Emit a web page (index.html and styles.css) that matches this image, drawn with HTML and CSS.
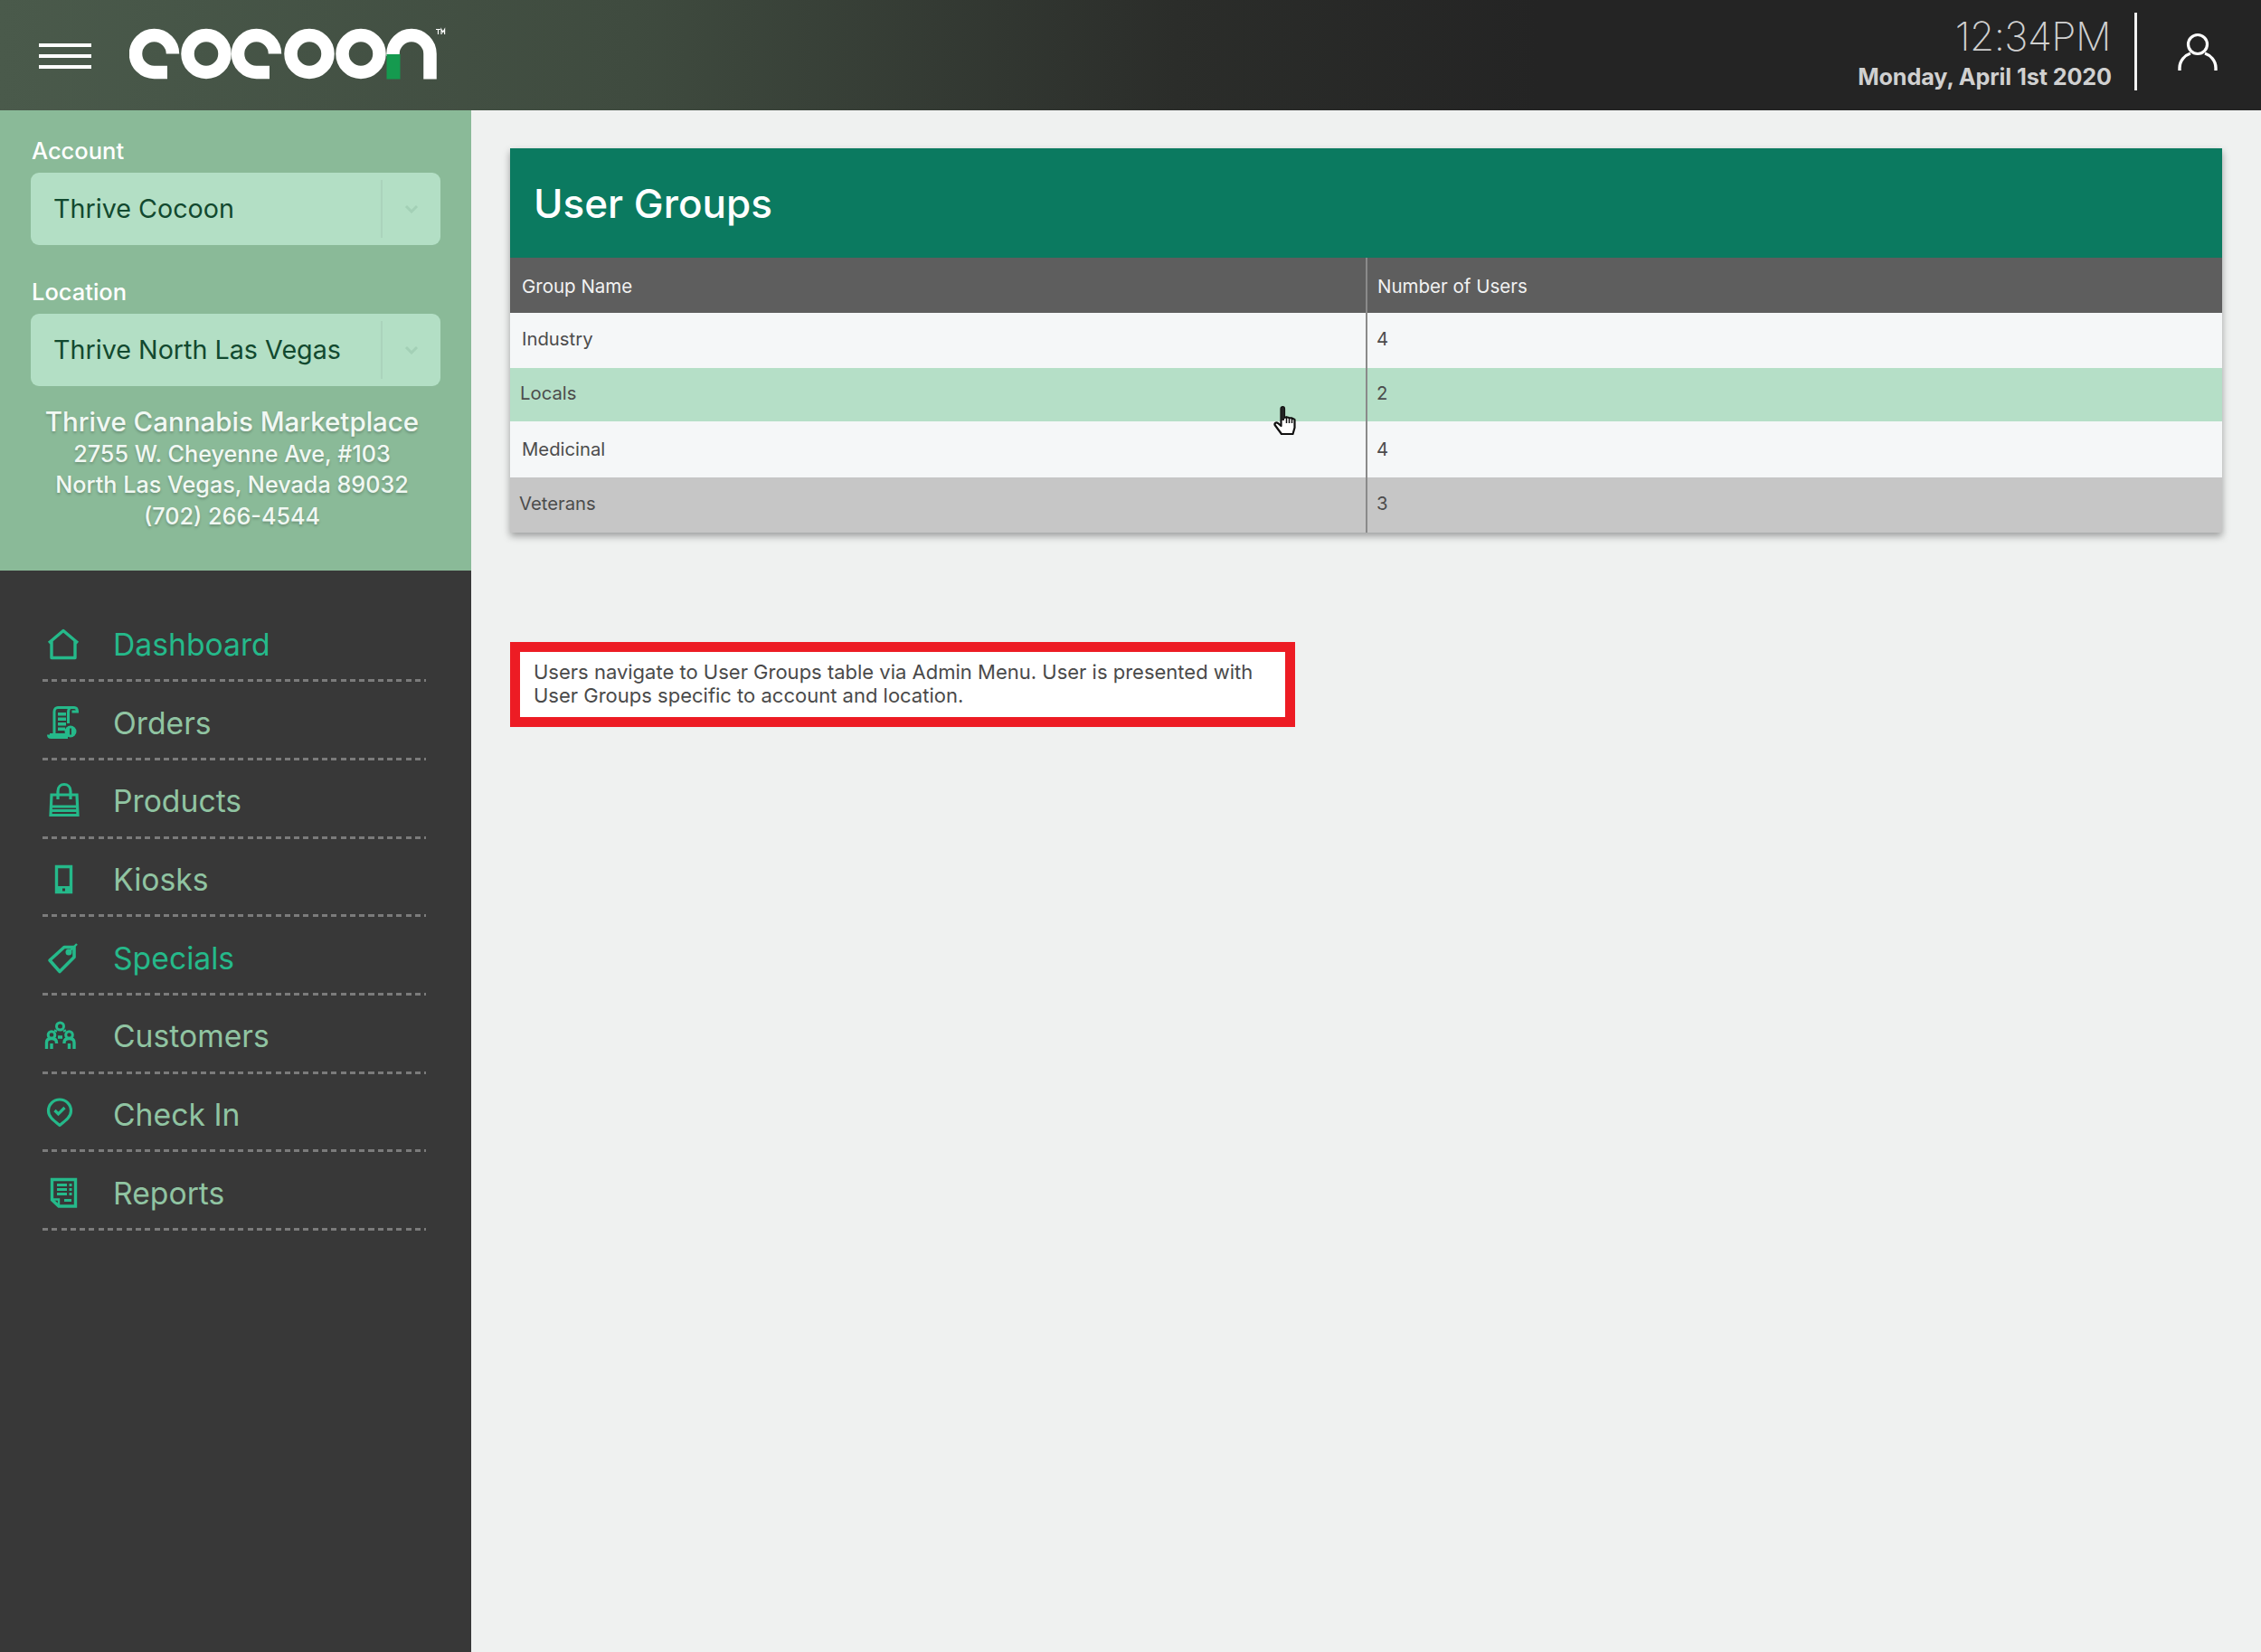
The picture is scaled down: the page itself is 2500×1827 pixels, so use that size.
FILE: index.html
```html
<!DOCTYPE html>
<html lang="en">
<head>
<meta charset="utf-8">
<title>User Groups</title>
<link rel="stylesheet" href="styles.css">
</head>
<body>
<div class="app">
  <header class="topbar">
    <button class="burger" aria-label="Menu"><span></span><span></span><span></span></button>
    <svg class="logo" viewBox="0 0 352 58" width="352" height="58" aria-label="cocoon">
      <g fill="none" stroke="#fff" stroke-width="14.5">
        <path d="M48 29.5A20.5 20.5 0 1 0 27.5 50H42"/>
        <circle cx="85" cy="29.5" r="20.5"/>
        <path d="M161 29.5A20.5 20.5 0 1 0 140.500 50H155"/>
        <circle cx="199" cy="29.5" r="20.5"/>
        <circle cx="256" cy="29.5" r="20.5"/>
        <path d="M291.500 32V29.500A20.500 20.500 0 0 1 332.500 29.500V57.500"/>
      </g>
      <rect x="284.500" y="30" width="15" height="27.500" fill="#159a4f"/>
      <path d="M339 2.500h5M341.500 2.500v5.500M345 8V2.500l1.800 3 1.800-3V8" fill="none" stroke="#fff" stroke-width="1.200"/>
    </svg>
    <div class="clock">
      <div class="time">12:34PM</div>
      <div class="date">Monday, April 1st 2020</div>
    </div>
    <svg class="user" viewBox="0 0 44 44" width="44" height="44">
      <circle cx="22" cy="13" r="10.500" fill="none" stroke="#fff" stroke-width="3.200"/>
      <path d="M2 42v-3C2 31 8 25 14 23M42 42v-3C42 31 36 25 30 23" fill="none" stroke="#fff" stroke-width="3.400"/>
    </svg>
  </header>

  <div class="body">
    <aside class="sidebar">
      <section class="selectors">
        <label class="field-label">Account</label>
        <div class="select">
          <span class="select-value">Thrive Cocoon</span>
          <span class="select-arrow"><svg viewBox="0 0 16 10" width="16" height="10"><path d="M2 2l6 6 6-6" fill="none" stroke="#a3d0b6" stroke-width="3"/></svg></span>
        </div>
        <label class="field-label second">Location</label>
        <div class="select">
          <span class="select-value">Thrive North Las Vegas</span>
          <span class="select-arrow"><svg viewBox="0 0 16 10" width="16" height="10"><path d="M2 2l6 6 6-6" fill="none" stroke="#a3d0b6" stroke-width="3"/></svg></span>
        </div>
        <address class="store">
          <div class="store-name">Thrive Cannabis Marketplace</div>
          <div>2755 W. Cheyenne Ave, #103</div>
          <div>North Las Vegas, Nevada 89032</div>
          <div>(702) 266-4544</div>
        </address>
      </section>
      <nav class="nav">
        <a class="nav-item active">
          <svg class="nav-icon" viewBox="0 0 48 48"><path d="M10 22L26 8.500 42 22M13 19.500V38.500H39V19.500" fill="none" stroke-width="3.400" stroke-linejoin="round"/></svg>
          <span>Dashboard</span>
        </a>
        <a class="nav-item">
          <svg class="nav-icon" viewBox="0 0 48 48"><path d="M16 33V11c0-3 2-4.500 4-4.500h18c2.500 0 3.500 2 3.500 4.500h-6M34 6.500c-2 1-2.500 3-2.500 5V24M11 37h21M9.500 36.500c0 2 1.500 3 3 3H31M16 36v-3" fill="none" stroke-width="3"/><path d="M20 12h9v3.500h-9zM20 17.500h9V21h-9zM20 23h9v3.500h-9zM20 28.500h8V32h-8zM11 35h20v4H11z"/><circle cx="34" cy="33" r="6.500"/><path d="M34 29.500v7" stroke="#383838" stroke-width="1.800"/></svg>
          <span>Orders</span>
        </a>
        <a class="nav-item">
          <svg class="nav-icon" viewBox="0 0 48 48"><path d="M13 16H41L42 38.500H12ZM13 29H41M13 33.500H41M20 21V12c0-10 14-10 14 0v9" fill="none" stroke-width="3.200"/></svg>
          <span>Products</span>
        </a>
        <a class="nav-item">
          <svg class="nav-icon" viewBox="0 0 48 48"><path d="M18.500 9.500H34.500V37.500H18.500Z" fill="none" stroke-width="3.400"/><path d="M18 31H35V39H18Z"/><path d="M25 33.500h3v3h-3z" fill="#383838" stroke="none"/></svg>
          <span>Kiosks</span>
        </a>
        <a class="nav-item">
          <svg class="nav-icon" viewBox="0 0 48 48"><path d="M11 26L27 11.500H38V22.500L22 38.500Z" fill="none" stroke-width="3.600" stroke-linejoin="round"/><circle cx="32" cy="17" r="3.500"/><path d="M34 15l7-7" fill="none" stroke-width="2.400"/></svg>
          <span>Specials</span>
        </a>
        <a class="nav-item">
          <svg class="nav-icon" viewBox="0 0 48 48"><circle cx="22.500" cy="12" r="4" fill="none" stroke-width="3"/><circle cx="13" cy="21.500" r="3.800" fill="none" stroke-width="3"/><circle cx="32.500" cy="21.500" r="3.800" fill="none" stroke-width="3"/><path d="M18 16l-1 2M27 16l1 2M7.500 37V30c0-3 2-4.500 5.500-4.500s5.500 1.500 5.500 4.500v1M13 37v-6M27 31v-1c0-3 2-4.500 5.500-4.500S38 27 38 30v7M32.500 37v-6M20 24h5" fill="none" stroke-width="3.400"/></svg>
          <span>Customers</span>
        </a>
        <a class="nav-item">
          <svg class="nav-icon" viewBox="0 0 48 48"><path d="M22 35.500C15 30 9.500 26 9.500 19.500a12.500 12.500 0 0 1 25 0C34.500 26 29 30 22 35.500Z" fill="none" stroke-width="3.200" stroke-linejoin="round"/><path d="M16.500 19l4 4 7-7" fill="none" stroke-width="3.200"/></svg>
          <span>Check In</span>
        </a>
        <a class="nav-item">
          <svg class="nav-icon" viewBox="0 0 48 48"><path d="M13.500 8.500H39.500V38H21L13.500 31Z" fill="none" stroke-width="3.400"/><path d="M19 13h11v3H19zM32.500 13h3v3h-3zM19 18h11v3H19zM32.500 18h3v3h-3zM19 23h11v3H19zM32.500 23h3v3h-3zM27 30h8v3h-8z" stroke="none"/><path d="M14 30.500h7v7" fill="none" stroke-width="2.400"/></svg>
          <span>Reports</span>
        </a>
      </nav>
    </aside>

    <main class="main">
      <section class="card">
        <h1 class="card-title">User Groups</h1>
        <div class="row head"><div class="cell">Group Name</div><div class="cell">Number of Users</div></div>
        <div class="row plain"><div class="cell">Industry</div><div class="cell">4</div></div>
        <div class="row hover"><div class="cell">Locals</div><div class="cell">2</div></div>
        <div class="row plain tall"><div class="cell">Medicinal</div><div class="cell">4</div></div>
        <div class="row grey"><div class="cell">Veterans</div><div class="cell">3</div></div>
        <svg class="cursor" viewBox="0 0 26 32" width="26" height="32"><path d="M8.500 3c0-2.500 3.500-2.500 3.500 0v10l2.500-.8 2.800.8 2.700.3 3.500 1.700V24l-2 7H9l-7-9.500c-1.500-2 .8-4 3-2.500l3.500 3Z" fill="#fff" stroke="#111" stroke-width="2.200" stroke-linejoin="round"/><path d="M14.500 13v6M17.500 13.500V19M20.500 14v5" stroke="#111" stroke-width="1.500"/><path d="M8.500 3c0-2.500 3.500-2.500 3.500 0v13H8.500Z" fill="#222"/></svg>
      </section>
      <aside class="callout">Users navigate to User Groups table via Admin Menu. User is presented with User Groups specific to account and location.</aside>
    </main>
  </div>
</div>
</body>
</html>
```

FILE: styles.css
```css
* { box-sizing: border-box; }
html, body { margin: 0; padding: 0; }
body { font-family: Inter, "Open Sans", "Liberation Sans", sans-serif; background: #eff1f0; }
.app { width: 2500px; height: 1827px; display: flex; flex-direction: column; overflow: hidden; }

.topbar {
  height: 122px; flex: none; display: flex; align-items: center; padding-left: 43px;
  background: linear-gradient(90deg, #4a5a4b 0, #3f4b3f 700px, #2b2d2a 1300px, #242424 1700px);
}
.burger { width: 58px; height: 28px; padding: 0; border: 0; background: none; display: flex; flex-direction: column; justify-content: space-between; margin-top: 2px; }
.burger span { display: block; height: 4px; background: #fff; }
.logo { margin-left: 42px; margin-top: -5px; flex: none; }
.clock { position: relative; margin-left: auto; text-align: right; color: #d0d0d0; width: 300px; margin-top: -6.500px; }
.time { font-size: 44px; line-height: 50px; font-weight: 200; letter-spacing: -.5px; padding-right: 1px; }
.date { font-size: 25.200px; line-height: 32px; margin-top: 3.500px; font-weight: 700; letter-spacing: -.1px; }
.clock::after { content: ""; position: absolute; right: -28px; top: -1px; height: 86px; width: 3px; background: #f2f2f2; }
.user { margin-left: 73px; margin-right: 48px; margin-top: -6px; flex: none; }

.body { flex: 1; display: flex; min-height: 0; }
.sidebar { width: 521px; flex: none; display: flex; flex-direction: column; background: #383838; }
.selectors { height: 509px; background: #8aba98; padding: 30px 34px 0; }
.field-label { display: block; color: #fff; font-size: 25.500px; font-weight: 500; line-height: 30px; height: 39px; padding-left: 1px; }
.field-label.second { margin-top: 37px; }
.select { height: 80px; width: 453px; border-radius: 9px; background: #b3dfc5; display: flex; align-items: center; padding-left: 25px; }
.select-value { flex: 1; color: #12492f; font-size: 28.700px; font-weight: 400; padding-bottom: 2px; }
.select-arrow { width: 66px; height: 64px; border-left: 2px solid #abd3bc; display: flex; align-items: center; justify-content: center; }
.store { font-style: normal; text-align: center; color: #f1f8f3; width: 445px; margin-top: 22px; font-size: 25.200px; line-height: 34.500px; text-shadow: 0 2px 3px rgba(0,0,0,.22); font-weight: 500; }
.store-name { font-size: 29.500px; margin-bottom: 1px; }

.nav { padding: 36.500px 50px 0 47px; }
.nav-item {
  height: 86.700px; display: flex; align-items: center; padding-top: 8px; color: #90c4a2; font-size: 33.700px; text-decoration: none;
  background: repeating-linear-gradient(90deg, #7b7b7b 0 6px, transparent 6px 10.300px) left bottom / 100% 3px no-repeat;
}
.nav-item.active { color: #25b98a; }
.nav-item:nth-child(5) { color: #25b98a; }
.nav-item span { margin-left: 33px; padding-bottom: 5px; }
.nav-icon { width: 48px; height: 48px; flex: none; margin: -3px 0 0 -3px; fill: #25b98a; stroke: #25b98a; stroke-width: 0; }

.main { flex: 1; padding: 42px 43px 0; }
.card { position: relative; box-shadow: 0 4px 8px rgba(0,0,0,.35); }
.card-title { margin: 0; height: 121px; background: #0b7a60; color: #fff; font-size: 44px; font-weight: 500; line-height: 123px; padding-left: 26px; }
.row { display: grid; grid-template-columns: 946px 1fr; height: 61px; font-size: 20.300px; color: #4c4c4c; align-items: stretch; }
.row .cell { display: flex; align-items: center; padding-left: 13px; padding-bottom: 4px; }
.row .cell + .cell { border-left: 2px solid #8a8a8a; padding-left: 10px; }
.row.head { background: #5e5e5e; color: #f2f2f2; font-size: 20.500px; }
.row.head .cell { padding-bottom: 0; padding-top: 2px; }
.row.head .cell + .cell { padding-left: 11px; }
.row.plain { background: #f5f7f8; }
.row.hover { background: #b5dfc7; height: 59px; }
.row.hover .cell:first-child { padding-left: 11px; }
.row.tall { height: 62px; }
.row.tall .cell { padding-bottom: 1px; }
.row.grey { background: #c6c6c6; }
.row.grey .cell:first-child { padding-left: 10px; }
.cursor { position: absolute; left: 844px; top: 285px; }

.callout { margin-top: 121px; width: 868px; height: 94px; border: 11px solid #ed1c24; background: #fff; color: #4a4a4a; padding: 8.500px 15px; font-size: 22px; line-height: 26px; }
```
